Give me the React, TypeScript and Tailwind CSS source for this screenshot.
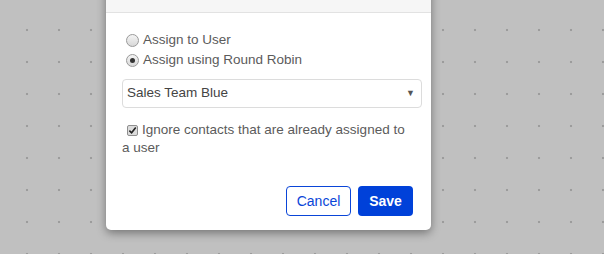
import { useState } from "react";

function Radio({ checked }: { checked?: boolean }) {
  return (
    <span className="flex h-[13px] w-[13px] shrink-0 items-center justify-center rounded-full border border-[#9a9a9a] bg-[linear-gradient(#f4f4f4,#d8d8d8)]">
      {checked && <span className="h-[5px] w-[5px] rounded-full bg-[#333]"></span>}
    </span>
  );
}

export default function App() {
  const [mode] = useState("robin");
  return (
    <div
      className="relative h-[254px] w-[604px] overflow-hidden bg-[#c0c0c0] bg-[radial-gradient(circle,#9c9c9c_1px,transparent_1.6px)] bg-[length:32px_32px] bg-[position:11px_14px]"
      style={{ fontFamily: '"Liberation Sans", Arial, sans-serif' }}
    >
      {/* modal */}
      <div className="absolute left-[106px] top-[-40px] w-[325px] rounded-b-[5px] bg-white shadow-[0_3px_10px_rgba(0,0,0,0.4)]">
        <div className="h-[53px] border-b border-[#e2e2e2] bg-[#f6f6f6]"></div>
        <div className="pl-[16px] pr-[9px] pt-[17px] pb-[14px] text-[13.5px] text-[#5b5b5b]">
          <label className="flex h-[20px] items-center gap-[4px] pl-[4px]">
            <Radio checked={mode === "user"} />
            <span>Assign to User</span>
          </label>
          <label className="flex h-[20px] items-center gap-[4px] pl-[4px]">
            <Radio checked={mode === "robin"} />
            <span>Assign using Round Robin</span>
          </label>

          <div className="mt-[9px] flex h-[29px] items-center justify-between rounded-[4px] border border-[#dcdcdc] pl-[4px] pr-[6px] text-[#444]">
            <span>Sales Team Blue</span>
            <span className="text-[9px] text-[#555]">▼</span>
          </div>

          <p className="mt-[13px] pr-[10px] leading-[18px]">
            <span className="relative top-[1px] mr-[4px] ml-[5px] inline-flex h-[11px] w-[11px] items-center justify-center rounded-[2px] border border-[#8f8f8f] bg-[#dcdcdc] align-baseline">
              <svg viewBox="0 0 10 10" className="h-[9px] w-[9px]">
                <path d="M1.5 5.2 L4 7.6 L8.6 1.8" fill="none" stroke="#222" strokeWidth="1.8" />
              </svg>
            </span>
            Ignore contacts that are already assigned to a user
          </p>

          <div className="mt-[29px] flex justify-end gap-[7px] pr-[9px]">
            <button className="h-[30px] w-[65px] rounded-[4px] border border-[#0a45d8] bg-white text-[14px] text-[#0a45d8]">
              Cancel
            </button>
            <button className="h-[30px] w-[55px] rounded-[4px] bg-[#0041d9] text-[14px] font-bold text-white">
              Save
            </button>
          </div>
        </div>
      </div>
    </div>
  );
}
